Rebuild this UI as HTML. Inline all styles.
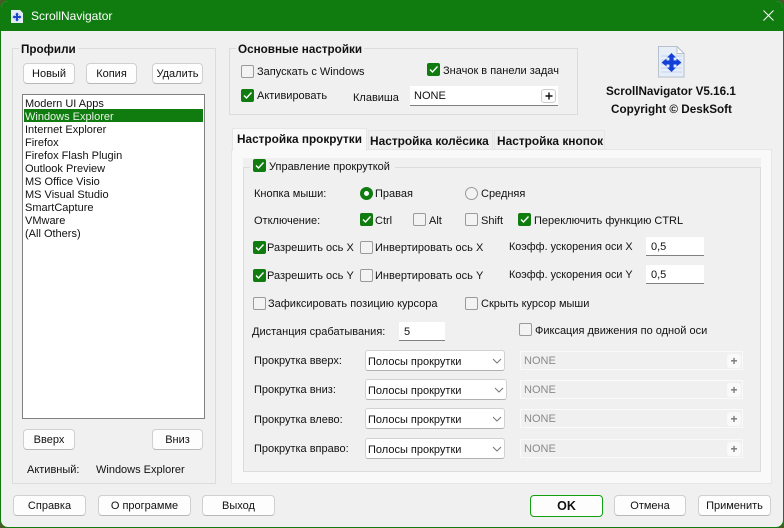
<!DOCTYPE html>
<html><head><meta charset="utf-8"><style>
html,body{margin:0;padding:0;width:784px;height:528px;overflow:hidden;background:#4a5a28}
body{position:relative;font-family:"Liberation Sans",sans-serif;font-size:11px;color:#111}
#w{position:absolute;left:0;top:0;width:782px;height:526px;border:1px solid #107c10;border-radius:8px;background:#f0f0f0;overflow:hidden}
#c{position:absolute;left:-1px;top:-1px;width:784px;height:528px}
#c div,#c span,#c svg{position:absolute;box-sizing:border-box}
.t{white-space:nowrap;line-height:14px;margin-top:1px}
.b{font-weight:bold;font-size:11.7px}
.g{border:1px solid #dcdcdc}
.l{background:#f0f0f0;padding:0 2px}
.btn{background:#fdfdfd;border:1px solid #d0d0d0;border-bottom-color:#b8b8b8;border-radius:4px;text-align:center;line-height:20px;white-space:nowrap}
.cb{width:13px;height:13px;background:#f3f3f3;border:1px solid #9a9a9a;border-radius:2px}
.on{background:#107c10;border-color:#107c10}
.on svg{left:0;top:0}
.in{background:#fff;border-bottom:1px solid #808080;line-height:20px;padding-left:5px}
.sel{background:#fff;border:1px solid #d2d2d2;border-bottom-color:#b0b0b0;border-radius:3px;line-height:22px;padding-left:2px;white-space:nowrap}
.nn{background:#f0f0f0;border:1px solid #fafafa;color:#8a8a8a;line-height:18px;padding-left:3px;left:520px;width:223px;height:19px}
.pl{left:727px;width:14px;height:14px;background:#f9f9f9;border-radius:3px;color:#777;font-weight:bold;font-size:12px;line-height:15px;text-align:center}
</style></head><body>
<div id="w"><div id="c">
<div style="left:0;top:0;width:784px;height:31px;background:#107c10"></div>
<svg style="left:11px;top:10px" width="12" height="13" viewBox="0 0 12 13"><path d="M0 0H9L12 3V13H0Z" fill="#e4ecf8"/><path d="M6 2.5L8 4.5H7V6H8.5V5L10.5 7L8.5 9V8H7V9.5H8L6 11.5L4 9.5H5V8H3.5V9L1.5 7L3.5 5V6H5V4.5H4Z" fill="#1a45c8"/></svg>
<span class="t" style="left:31px;top:8px;color:#fff;font-size:12px">ScrollNavigator</span>
<svg style="left:763px;top:10px" width="11" height="11" viewBox="0 0 11 11"><path d="M.5 .5L10.5 10.5M10.5 .5L.5 10.5" stroke="#fff" stroke-width="1"/></svg>

<div class="g" style="left:12px;top:48px;width:204px;height:436px"></div>
<span class="t b l" style="left:19px;top:42px">Профили</span>
<div class="btn" style="left:23px;top:63px;width:52px;height:21px">Новый</div>
<div class="btn" style="left:86px;top:63px;width:51px;height:21px">Копия</div>
<div class="btn" style="left:152px;top:63px;width:51px;height:21px">Удалить</div>
<div style="left:22px;top:94px;width:183px;height:325px;background:#fff;border:1px solid #808080"></div>
<div style="left:24px;top:109px;width:179px;height:13px;background:#107c10"></div>
<span class="t" style="left:25px;top:96px">Modern UI Apps</span>
<span class="t" style="left:25px;top:109px;color:#e8f4e8">Windows Explorer</span>
<span class="t" style="left:25px;top:122px">Internet Explorer</span>
<span class="t" style="left:25px;top:135px">Firefox</span>
<span class="t" style="left:25px;top:148px">Firefox Flash Plugin</span>
<span class="t" style="left:25px;top:161px">Outlook Preview</span>
<span class="t" style="left:25px;top:174px">MS Office Visio</span>
<span class="t" style="left:25px;top:187px">MS Visual Studio</span>
<span class="t" style="left:25px;top:200px">SmartCapture</span>
<span class="t" style="left:25px;top:213px">VMware</span>
<span class="t" style="left:25px;top:226px">(All Others)</span>
<div class="btn" style="left:23px;top:429px;width:52px;height:21px">Вверх</div>
<div class="btn" style="left:152px;top:429px;width:51px;height:21px">Вниз</div>
<span class="t" style="left:27px;top:462px">Активный:</span>
<span class="t" style="left:96px;top:462px">Windows Explorer</span>

<div class="g" style="left:229px;top:48px;width:349px;height:67px"></div>
<span class="t b l" style="left:236px;top:42px">Основные настройки</span>
<div class="cb" style="left:241px;top:65px"></div><span class="t" style="left:257px;top:64px">Запускать с Windows</span>
<div class="cb on" style="left:427px;top:63px"><svg width="11" height="11" viewBox="0 0 11 11"><path d="M2 5.5L4.5 8L9.5 2.5" fill="none" stroke="#fff" stroke-width="1.4"/></svg></div><span class="t" style="left:443px;top:63px">Значок в панели задач</span>
<div class="cb on" style="left:241px;top:89px"><svg width="11" height="11" viewBox="0 0 11 11"><path d="M2 5.5L4.5 8L9.5 2.5" fill="none" stroke="#fff" stroke-width="1.4"/></svg></div><span class="t" style="left:257px;top:88px">Активировать</span>
<span class="t" style="left:353px;top:90px">Клавиша</span>
<div class="in" style="left:410px;top:86px;width:148px;height:20px;padding-left:4px;line-height:20px">NONE</div>
<div style="left:541px;top:89px;width:15px;height:14px;background:#fdfdfd;border:1px solid #ccc;border-radius:3px"></div>
<svg style="left:545px;top:92px" width="8" height="8" viewBox="0 0 8 8"><path d="M4 .5V7.5M.5 4H7.5" stroke="#111" stroke-width="1.4"/></svg>

<svg style="left:658px;top:46px" width="27" height="32" viewBox="0 0 27 32"><path d="M.5 .5H19L26 7.5V31H.5Z" fill="#e6eefa" stroke="#b8c0cc"/><path d="M19 .5V7.5H26Z" fill="#fff" stroke="#b8c0cc"/><path d="M3 10H24M3 14H24M3 18H24M3 22H24M3 26H24" stroke="#c6d6ee"/><path d="M13.5 7L18 11.5H15.6V14.5H18.5V12.5L23.5 16.5L18.5 20.5V18.5H15.6V21.5H18L13.5 26L9 21.5H11.4V18.5H8.5V20.5L3.5 16.5L8.5 12.5V14.5H11.4V11.5H9Z" fill="#1240d8"/></svg>
<span class="t b" style="left:606px;top:84px">ScrollNavigator V5.16.1</span>
<span class="t b" style="left:611px;top:102px">Copyright © DeskSoft</span>

<div style="left:231px;top:149px;width:541px;height:335px;background:#f9f9f9;border:1px solid #e6e6e6"></div>
<div style="left:232px;top:128px;width:135px;height:23px;background:#f9f9f9;border:1px solid #e6e6e6;border-bottom:0"></div>
<div style="left:368px;top:130px;width:125px;height:19px;background:#f0f0f0;border:1px solid #e6e6e6;border-bottom:0"></div>
<div style="left:494px;top:130px;width:111px;height:19px;background:#f0f0f0;border:1px solid #e6e6e6;border-bottom:0"></div>
<span class="t b" style="left:237px;top:131px;font-size:11.8px">Настройка прокрутки</span>
<span class="t b" style="left:370px;top:133px;font-size:11.9px">Настройка колёсика</span>
<span class="t b" style="left:497px;top:133px;font-size:11.9px">Настройка кнопок</span>
<div style="left:243px;top:158px;width:518px;height:314px;background:#f0f0f0"></div>
<div style="left:243px;top:167px;width:518px;height:305px;border:1px solid #dcdcdc"></div>
<div style="left:250px;top:158px;width:145px;height:14px;background:#f0f0f0"></div>

<div class="cb on" style="left:253px;top:159px"><svg width="11" height="11" viewBox="0 0 11 11"><path d="M2 5.5L4.5 8L9.5 2.5" fill="none" stroke="#fff" stroke-width="1.4"/></svg></div><span class="t" style="left:269px;top:159px">Управление прокруткой</span>
<span class="t" style="left:254px;top:186px">Кнопка мыши:</span>
<div style="left:360px;top:187px;width:13px;height:13px;border-radius:50%;background:#fff;border:4px solid #107c10"></div><span class="t" style="left:375px;top:186px">Правая</span>
<div style="left:465px;top:187px;width:13px;height:13px;border-radius:50%;background:#f3f3f3;border:1px solid #9a9a9a"></div><span class="t" style="left:481px;top:186px">Средняя</span>
<span class="t" style="left:254px;top:213px">Отключение:</span>
<div class="cb on" style="left:360px;top:213px"><svg width="11" height="11" viewBox="0 0 11 11"><path d="M2 5.5L4.5 8L9.5 2.5" fill="none" stroke="#fff" stroke-width="1.4"/></svg></div><span class="t" style="left:375px;top:213px">Ctrl</span>
<div class="cb" style="left:413px;top:213px"></div><span class="t" style="left:429px;top:213px">Alt</span>
<div class="cb" style="left:465px;top:213px"></div><span class="t" style="left:481px;top:213px">Shift</span>
<div class="cb on" style="left:518px;top:213px"><svg width="11" height="11" viewBox="0 0 11 11"><path d="M2 5.5L4.5 8L9.5 2.5" fill="none" stroke="#fff" stroke-width="1.4"/></svg></div><span class="t" style="left:534px;top:213px">Переключить функцию CTRL</span>

<div class="cb on" style="left:253px;top:241px"><svg width="11" height="11" viewBox="0 0 11 11"><path d="M2 5.5L4.5 8L9.5 2.5" fill="none" stroke="#fff" stroke-width="1.4"/></svg></div><span class="t" style="left:267px;top:240px">Разрешить ось X</span>
<div class="cb" style="left:360px;top:241px"></div><span class="t" style="left:375px;top:240px">Инвертировать ось X</span>
<span class="t" style="left:509px;top:239px;font-size:10.8px">Коэфф. ускорения оси X</span>
<div class="in" style="left:646px;top:237px;width:58px;height:19px">0,5</div>
<div class="cb on" style="left:253px;top:269px"><svg width="11" height="11" viewBox="0 0 11 11"><path d="M2 5.5L4.5 8L9.5 2.5" fill="none" stroke="#fff" stroke-width="1.4"/></svg></div><span class="t" style="left:267px;top:268px">Разрешить ось Y</span>
<div class="cb" style="left:360px;top:269px"></div><span class="t" style="left:375px;top:268px">Инвертировать ось Y</span>
<span class="t" style="left:509px;top:267px;font-size:10.8px">Коэфф. ускорения оси Y</span>
<div class="in" style="left:646px;top:265px;width:58px;height:19px">0,5</div>
<div class="cb" style="left:253px;top:297px"></div><span class="t" style="left:268px;top:296px">Зафиксировать позицию курсора</span>
<div class="cb" style="left:465px;top:297px"></div><span class="t" style="left:481px;top:296px">Скрыть курсор мыши</span>
<span class="t" style="left:252px;top:324px">Дистанция срабатывания:</span>
<div class="in" style="left:399px;top:322px;width:46px;height:19px">5</div>
<div class="cb" style="left:519px;top:323px"></div><span class="t" style="left:535px;top:323px">Фиксация движения по одной оси</span>

<span class="t" style="left:254px;top:353px">Прокрутка вверх:</span>
<div class="sel" style="left:365px;top:350px;width:140px;height:21px">Полосы прокрутки</div>
<svg style="left:492px;top:358px" width="10" height="6" viewBox="0 0 10 6"><path d="M1 1L5 5L9 1" fill="none" stroke="#777"/></svg>
<span class="t" style="left:254px;top:382px">Прокрутка вниз:</span>
<div class="sel" style="left:365px;top:379px;width:142px;height:21px">Полосы прокрутки</div>
<svg style="left:494px;top:387px" width="10" height="6" viewBox="0 0 10 6"><path d="M1 1L5 5L9 1" fill="none" stroke="#777"/></svg>
<span class="t" style="left:254px;top:412px">Прокрутка влево:</span>
<div class="sel" style="left:365px;top:408px;width:140px;height:21px">Полосы прокрутки</div>
<svg style="left:492px;top:416px" width="10" height="6" viewBox="0 0 10 6"><path d="M1 1L5 5L9 1" fill="none" stroke="#777"/></svg>
<span class="t" style="left:254px;top:441px">Прокрутка вправо:</span>
<div class="sel" style="left:365px;top:438px;width:140px;height:21px">Полосы прокрутки</div>
<svg style="left:492px;top:446px" width="10" height="6" viewBox="0 0 10 6"><path d="M1 1L5 5L9 1" fill="none" stroke="#777"/></svg>

<div class="nn" style="top:351px">NONE</div><div class="pl" style="top:354px">+</div>
<div class="nn" style="top:380px">NONE</div><div class="pl" style="top:383px">+</div>
<div class="nn" style="top:409px">NONE</div><div class="pl" style="top:412px">+</div>
<div class="nn" style="top:439px">NONE</div><div class="pl" style="top:442px">+</div>

<div class="btn" style="left:13px;top:495px;width:73px;height:21px">Справка</div>
<div class="btn" style="left:98px;top:495px;width:93px;height:21px">О программе</div>
<div class="btn" style="left:202px;top:495px;width:73px;height:21px">Выход</div>
<div class="btn b" style="left:530px;top:495px;width:73px;height:22px;border:1px solid #10a010;font-size:12.5px">OK</div>
<div class="btn" style="left:614px;top:495px;width:72px;height:21px">Отмена</div>
<div class="btn" style="left:698px;top:495px;width:73px;height:21px">Применить</div>
</div></div>
</body></html>
